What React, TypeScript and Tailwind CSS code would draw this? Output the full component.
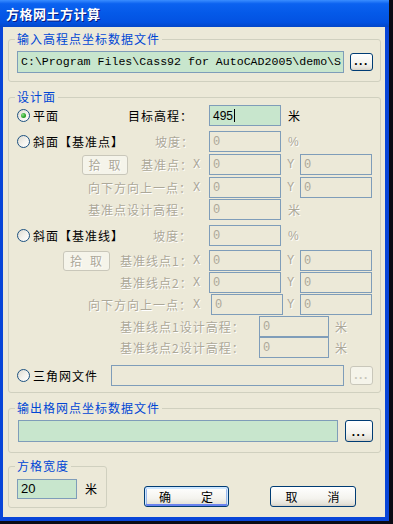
import type { ReactNode } from "react";

const dim = "text-[#aca899] [text-shadow:1px_1px_0_#ffffff]";

function Radio({ checked }: { checked?: boolean }) {
  return (
    <span className="flex h-[13px] w-[13px] shrink-0 items-center justify-center rounded-full border border-[#1c5180] bg-[linear-gradient(135deg,#dcdad1_0%,#f4f3ee_55%,#ffffff_100%)]">
      {checked && (
        <span className="h-[5px] w-[5px] rounded-full bg-[radial-gradient(circle_at_35%_35%,#8de08a_0%,#2ea82b_55%,#1a7f1a_100%)]" />
      )}
    </span>
  );
}

function Box({
  w,
  h = "h-[21px]",
  green,
  children,
}: {
  w: string;
  h?: string;
  green?: boolean;
  children?: ReactNode;
}) {
  return (
    <div
      className={`${w} ${h} flex shrink-0 items-center overflow-hidden whitespace-nowrap border border-[#7f9db9] pl-[3px] ${
        green ? "bg-[#c8e6cd] text-black" : "bg-[#ece9d8] text-[#aca899]"
      }`}
    >
      {children}
    </div>
  );
}

function Zero() {
  return <span className="font-['Liberation_Mono',monospace] text-[12px] tracking-normal">0</span>;
}

function PickBtn({ w }: { w: string }) {
  return (
    <div className={`${w} flex h-[20px] shrink-0 items-center justify-center gap-[7px] rounded-[3px] border border-[#c9c7ba] bg-[#f5f4ea] ${dim}`}>
      <span>拾</span>
      <span>取</span>
    </div>
  );
}

function DotsBtn({ w, h, disabled }: { w: string; h: string; disabled?: boolean }) {
  return (
    <div
      className={`${w} ${h} flex shrink-0 items-end justify-center rounded-[3px] border pb-[3px] font-['Liberation_Sans',sans-serif] text-[12px] font-bold leading-none tracking-[1.5px] ${
        disabled
          ? "border-[#c9c7ba] bg-[#f5f4ea] text-[#c9c7ba]"
          : "border-[#003c74] bg-[linear-gradient(180deg,#ffffff_0%,#f4f3ee_60%,#e5e3da_88%,#d6d0c5_100%)] text-black"
      }`}
    >
      ...
    </div>
  );
}

function XY({ t, w, pl }: { t: string; w: string; pl: string }) {
  return (
    <span className={`${w} ${pl} shrink-0 font-['Liberation_Mono',monospace] text-[12px] tracking-normal ${dim}`}>
      {t}
    </span>
  );
}

function Legend({ children }: { children: ReactNode }) {
  return <legend className="ml-[6px] px-[2px] leading-[16px] text-[#0046d5]">{children}</legend>;
}

export default function App() {
  return (
    <div className="h-[524px] w-[393px] bg-[#0a0a14] font-['Noto_Sans_CJK_SC','Liberation_Sans',sans-serif] text-[12px] tracking-[1px] text-black">
      <div className="flex h-[521px] w-[389px] flex-col">
        {/* title bar */}
        <div className="flex h-[27px] shrink-0 items-center bg-[linear-gradient(180deg,#3a8dff_0%,#0b62f0_14%,#0459e8_50%,#0352e2_82%,#0447c9_100%)] pl-[6px]">
          <span className="text-[13px] font-bold tracking-[0.5px] text-white [text-shadow:1px_1px_0_#0a1a80]">
            方格网土方计算
          </span>
        </div>

        {/* client */}
        <div className="flex flex-1 flex-col border-b-[4px] border-l-[3px] border-r-[4px] border-[#0845d8] bg-[#ece9d8] pl-[5px] pr-[4px] pt-[4px]">
          <fieldset className="rounded-[3px] border border-[#d0d0bf] pb-[8px] pt-[4px]">
            <Legend>输入高程点坐标数据文件</Legend>
            <div className="flex items-center pl-[8px]">
              <Box w="w-[327px]" h="h-[22px]" green>
                <span className="font-['Liberation_Mono',monospace] text-[11.6px] tracking-normal">
                  C:\Program Files\Cass92 for AutoCAD2005\demo\S
                </span>
              </Box>
              <div className="ml-[6px]">
                <DotsBtn w="w-[23px]" h="h-[18px]" />
              </div>
            </div>
          </fieldset>

          <fieldset className="mt-[7px] rounded-[3px] border border-[#d0d0bf] pb-[6px]">
            <Legend>设计面</Legend>

            <div className="flex h-[21px] items-center">
              <div className="flex w-[119px] shrink-0 items-center pl-[8px]">
                <Radio checked />
                <span className="ml-[3px]">平面</span>
              </div>
              <span className="w-[81px] shrink-0">目标高程：</span>
              <Box w="w-[72px]" green>
                <span className="font-['Liberation_Sans',sans-serif] text-[12px] tracking-normal">495</span>
                <span className="ml-[1px] h-[13px] w-[1px] bg-black" />
              </Box>
              <span className="ml-[7px]">米</span>
            </div>

            <div className="mt-[5px] flex h-[21px] items-center">
              <div className="flex w-[146px] shrink-0 items-center pl-[8px]">
                <Radio />
                <span className="ml-[3px] whitespace-nowrap">斜面【基准点】</span>
              </div>
              <span className={`w-[54px] shrink-0 ${dim}`}>坡度：</span>
              <Box w="w-[72px]"><Zero /></Box>
              <span className={`ml-[7px] font-['Liberation_Sans',sans-serif] ${dim}`}>%</span>
            </div>

            <div className="mt-[2px] flex h-[21px] items-center">
              <div className="flex w-[184px] shrink-0 items-center pl-[73px]">
                <PickBtn w="w-[46px]" />
                <span className={`ml-[13px] whitespace-nowrap ${dim}`}>基准点：</span>
              </div>
              <XY t="X" w="w-[16px]" pl="pl-0" />
              <Box w="w-[72px]"><Zero /></Box>
              <XY t="Y" w="w-[19px]" pl="pl-[6px]" />
              <Box w="w-[72px]"><Zero /></Box>
            </div>

            <div className="mt-[2px] flex h-[21px] items-center">
              <span className={`w-[184px] shrink-0 whitespace-nowrap pl-[79px] ${dim}`}>向下方向上一点：</span>
              <XY t="X" w="w-[16px]" pl="pl-0" />
              <Box w="w-[72px]"><Zero /></Box>
              <XY t="Y" w="w-[19px]" pl="pl-[6px]" />
              <Box w="w-[72px]"><Zero /></Box>
            </div>

            <div className="mt-[1px] flex h-[21px] items-center">
              <span className={`w-[200px] shrink-0 whitespace-nowrap pl-[79px] ${dim}`}>基准点设计高程：</span>
              <Box w="w-[72px]"><Zero /></Box>
              <span className={`ml-[7px] ${dim}`}>米</span>
            </div>

            <div className="mt-[5px] flex h-[21px] items-center">
              <div className="flex w-[144px] shrink-0 items-center pl-[8px]">
                <Radio />
                <span className="ml-[3px] whitespace-nowrap">斜面【基准线】</span>
              </div>
              <span className={`w-[56px] shrink-0 ${dim}`}>坡度：</span>
              <Box w="w-[72px]"><Zero /></Box>
              <span className={`ml-[7px] font-['Liberation_Sans',sans-serif] ${dim}`}>%</span>
            </div>

            <div className="mt-[4px] flex h-[21px] items-center">
              <div className="flex w-[184px] shrink-0 items-center pl-[54px]">
                <PickBtn w="w-[47px]" />
                <span className={`ml-[10px] whitespace-nowrap ${dim}`}>基准线点1：</span>
              </div>
              <XY t="X" w="w-[16px]" pl="pl-0" />
              <Box w="w-[72px]"><Zero /></Box>
              <XY t="Y" w="w-[19px]" pl="pl-[6px]" />
              <Box w="w-[72px]"><Zero /></Box>
            </div>

            <div className="mt-[1px] flex h-[21px] items-center">
              <span className={`w-[184px] shrink-0 whitespace-nowrap pl-[111px] ${dim}`}>基准线点2：</span>
              <XY t="X" w="w-[16px]" pl="pl-0" />
              <Box w="w-[72px]"><Zero /></Box>
              <XY t="Y" w="w-[19px]" pl="pl-[6px]" />
              <Box w="w-[72px]"><Zero /></Box>
            </div>

            <div className="mt-[1px] flex h-[21px] items-center">
              <span className={`w-[184px] shrink-0 whitespace-nowrap pl-[79px] ${dim}`}>向下方向上一点：</span>
              <XY t="X" w="w-[18px]" pl="pl-0" />
              <Box w="w-[72px]"><Zero /></Box>
              <XY t="Y" w="w-[17px]" pl="pl-[4px]" />
              <Box w="w-[72px]"><Zero /></Box>
            </div>

            <div className="mt-[1px] flex h-[21px] items-center">
              <span className={`w-[250px] shrink-0 whitespace-nowrap pl-[111px] ${dim}`}>基准线点1设计高程：</span>
              <Box w="w-[70px]"><Zero /></Box>
              <span className={`ml-[6px] ${dim}`}>米</span>
            </div>

            <div className="flex h-[21px] items-center">
              <span className={`w-[250px] shrink-0 whitespace-nowrap pl-[111px] ${dim}`}>基准线点2设计高程：</span>
              <Box w="w-[70px]"><Zero /></Box>
              <span className={`ml-[6px] ${dim}`}>米</span>
            </div>

            <div className="mt-[7px] flex h-[21px] items-center">
              <div className="flex w-[102px] shrink-0 items-center pl-[8px]">
                <Radio />
                <span className="ml-[3px] whitespace-nowrap">三角网文件</span>
              </div>
              <Box w="w-[233px]" />
              <div className="ml-[6px]">
                <DotsBtn w="w-[23px]" h="h-[19px]" disabled />
              </div>
            </div>
          </fieldset>

          <fieldset className="mt-[7px] rounded-[3px] border border-[#d0d0bf] pb-[10px] pt-[4px]">
            <Legend>输出格网点坐标数据文件</Legend>
            <div className="flex items-center pl-[9px]">
              <Box w="w-[320px]" h="h-[22px]" green />
              <div className="ml-[7px]">
                <DotsBtn w="w-[28px]" h="h-[22px]" />
              </div>
            </div>
          </fieldset>

          <div className="mt-[5px] flex items-start">
            <fieldset className="w-[99px] shrink-0 rounded-[3px] border border-[#d0d0bf] pb-[8px] pt-[5px]">
              <Legend>方格宽度</Legend>
              <div className="flex items-center pl-[8px]">
                <Box w="w-[60px]" h="h-[20px]" green>
                  <span className="font-['Liberation_Sans',sans-serif] text-[13px] tracking-normal">20</span>
                </Box>
                <span className="ml-[8px]">米</span>
              </div>
            </fieldset>

            <div className="ml-[37px] mt-[28px] flex items-center">
              <div className="flex h-[21px] w-[85px] items-center justify-center gap-[29px] rounded-[3px] border border-[#003c74] bg-[linear-gradient(180deg,#ffffff_0%,#f4f3ee_60%,#e5e3da_88%,#d6d0c5_100%)] shadow-[inset_0_1px_0_1px_#cee7ff,inset_0_-1px_0_1px_#6982ee,inset_1px_0_0_1px_#9db9eb,inset_-1px_0_0_1px_#9db9eb]">
                <span>确</span>
                <span>定</span>
              </div>
              <div className="ml-[41px] flex h-[21px] w-[86px] items-center justify-center gap-[29px] rounded-[3px] border border-[#003c74] bg-[linear-gradient(180deg,#ffffff_0%,#f4f3ee_60%,#e5e3da_88%,#d6d0c5_100%)]">
                <span>取</span>
                <span>消</span>
              </div>
            </div>
          </div>
        </div>
      </div>
    </div>
  );
}
